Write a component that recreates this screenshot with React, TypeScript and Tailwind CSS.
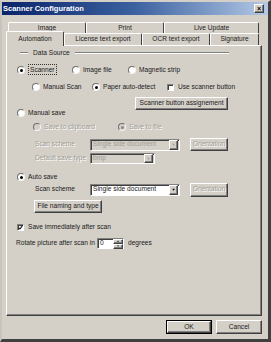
import type { ReactNode } from "react";

const raised =
  "border border-t-white border-l-white border-r-[#404040] border-b-[#404040] shadow-[inset_-1px_-1px_0_#808080]";
const sunken =
  "border border-t-[#808080] border-l-[#808080] border-r-white border-b-white shadow-[inset_1px_1px_0_#404040]";

function Radio({ checked, disabled, children }: { checked?: boolean; disabled?: boolean; children: ReactNode }) {
  return (
    <div className="flex items-center">
      <div
        className={`flex h-[8px] w-[8px] items-center justify-center rounded-full border border-t-[#707070] border-l-[#707070] border-r-[#f4f4f4] border-b-[#f4f4f4] ${
          disabled ? "bg-[#d4d0c8]" : "bg-white"
        }`}
      >
        {checked && <div className={`h-[3px] w-[3px] rounded-full ${disabled ? "bg-[#8a8a8a]" : "bg-black"}`} />}
      </div>
      <span className={`ml-[3px] ${disabled ? "text-[#a19d95] [text-shadow:1px_1px_0_#fff]" : ""}`}>{children}</span>
    </div>
  );
}

function Check({ checked, children }: { checked?: boolean; children: ReactNode }) {
  return (
    <div className="flex items-center">
      <div className={`flex h-[7px] w-[7px] items-center justify-center bg-white ${sunken}`}>
        {checked && <span className="text-[7px] font-bold leading-none text-black">✓</span>}
      </div>
      <span className="ml-[4px]">{children}</span>
    </div>
  );
}

function Button({ w, h, disabled, children }: { w: string; h: string; disabled?: boolean; children: ReactNode }) {
  return (
    <div
      className={`flex items-center justify-center bg-[#d4d0c8] ${raised} ${w} ${h} ${
        disabled ? "text-[#a19d95] [text-shadow:1px_1px_0_#fff]" : ""
      }`}
    >
      {children}
    </div>
  );
}

function Combo({ w, h, value, disabled }: { w: string; h: string; value: string; disabled?: boolean }) {
  return (
    <div className={`flex items-center ${sunken} ${w} ${h} ${disabled ? "bg-[#d4d0c8]" : "bg-white"}`}>
      <span className={`flex-1 pl-[2px] ${disabled ? "text-[#a19d95]" : ""}`}>{value}</span>
      <div className={`mr-[1px] flex h-full w-[9px] items-center justify-center bg-[#d4d0c8] ${raised}`}>
        <span className={`text-[4px] leading-none ${disabled ? "text-[#a19d95]" : "text-black"}`}>▼</span>
      </div>
    </div>
  );
}

function Tab({ label, w, selected, h }: { label: string; w: string; selected?: boolean; h: string }) {
  return (
    <div
      className={`flex items-center justify-center rounded-t-[2px] border-t border-l border-r border-t-white border-l-white border-r-[#404040] bg-[#d4d0c8] ${w} ${h} ${
        selected ? "relative z-10 -mb-px" : ""
      }`}
    >
      {label}
    </div>
  );
}

export default function App() {
  return (
    <div className="flex h-[342px] w-[271px] flex-col overflow-hidden whitespace-nowrap border-t-2 border-l-2 border-r-[3px] border-b-[3px] border-t-[#d4d0c8] border-l-[#c8c4bc] border-r-[#404040] border-b-[#404040] bg-[#d4d0c8] font-['Liberation_Sans',Arial,sans-serif] text-[6.6px] leading-none text-[#1a1a1a]">
      {/* title bar */}
      <div className="flex h-[13px] items-center bg-gradient-to-r from-[#0a246a] via-[#3d62a0] to-[#b4c9e6] pl-[1px]">
        <span className="text-[7.5px] font-bold text-white">Scanner Configuration</span>
        <div className={`mr-[4px] ml-auto flex h-[9px] w-[10px] items-center justify-center bg-[#d4d0c8] ${raised}`}>
          <span className="text-[7px] font-bold text-black">×</span>
        </div>
      </div>

      {/* tabs */}
      <div className="mt-[7px] flex h-[11px] pl-[6px]">
        <Tab label="Image" w="w-[78px]" h="h-[11px]" />
        <Tab label="Print" w="w-[78px]" h="h-[11px]" />
        <Tab label="Live Update" w="w-[95px]" h="h-[11px]" />
      </div>
      <div className="-mt-[2px] flex h-[14px] items-end pl-[4px]">
        <Tab label="Automation" w="w-[58px]" h="h-[15px]" selected />
        <Tab label="License text export" w="w-[78px]" h="h-[12px]" />
        <Tab label="OCR text export" w="w-[68px]" h="h-[12px]" />
        <Tab label="Signature" w="w-[49px]" h="h-[12px]" />
      </div>

      {/* page */}
      <div className={`ml-[4px] flex h-[271px] w-[256px] flex-col bg-[#d4d0c8] ${raised}`}>
        <div className="flex h-[14px] items-center">
          <div className="ml-[13px] flex w-[209px] items-center">
            <div className="h-[2px] w-[8px] border-t border-b border-t-[#808080] border-b-white" />
            <span className="mx-[5px]">Data Source</span>
            <div className="h-[2px] flex-1 border-t border-b border-t-[#808080] border-b-white" />
          </div>
        </div>

        <div className="mt-[3px] flex h-[14px] items-center pl-[10px]">
          <div className="w-[55px]">
            <Radio checked>
              <span className="border border-dotted border-[#333] px-[1px] py-[1px]">Scanner</span>
            </Radio>
          </div>
          <div className="w-[56px]">
            <Radio>Image file</Radio>
          </div>
          <Radio>Magnetic strip</Radio>
        </div>

        <div className="mt-[3px] flex h-[14px] items-center pl-[25px]">
          <div className="w-[60px]">
            <Radio>Manual Scan</Radio>
          </div>
          <div className="w-[75px]">
            <Radio checked>Paper auto-detect</Radio>
          </div>
          <Check>Use scanner button</Check>
        </div>

        <div className="mt-[3px] flex h-[13px] pl-[128px]">
          <Button w="w-[93px]" h="h-[13px]">
            Scanner button assignement
          </Button>
        </div>

        <div className="-mt-[3px] flex h-[12px] items-center pl-[10px]">
          <Radio>Manual save</Radio>
        </div>

        <div className="mt-[2px] flex h-[12px] items-center pl-[26px]">
          <div className="w-[85px]">
            <Radio disabled>Save to clipboard</Radio>
          </div>
          <Radio disabled checked>
            Save to file
          </Radio>
        </div>

        <div className="mt-[5px] flex h-[13px] items-center pl-[28px]">
          <span className="w-[55px] text-[#a19d95] [text-shadow:1px_1px_0_#fff]">Scan scheme</span>
          <Combo w="w-[90px]" h="h-[12px]" value="Single side document" disabled />
          <div className="ml-[10px]">
            <Button w="w-[38px]" h="h-[13px]" disabled>
              Orientation
            </Button>
          </div>
        </div>

        <div className="mt-[2px] flex h-[11px] items-center pl-[28px]">
          <span className="w-[55px] text-[#a19d95] [text-shadow:1px_1px_0_#fff]">Default save type</span>
          <Combo w="w-[65px]" h="h-[11px]" value="bmp" disabled />
        </div>

        <div className="mt-[7px] flex h-[12px] items-center pl-[10px]">
          <Radio checked>Auto save</Radio>
        </div>

        <div className="flex h-[13px] items-center pl-[28px]">
          <span className="w-[55px]">Scan scheme</span>
          <Combo w="w-[90px]" h="h-[12px]" value="Single side document" />
          <div className="ml-[10px]">
            <Button w="w-[38px]" h="h-[14px]" disabled>
              Orientation
            </Button>
          </div>
        </div>

        <div className="mt-[4px] flex h-[13px] pl-[27px]">
          <Button w="w-[68px]" h="h-[13px]">
            File naming and type
          </Button>
        </div>

        <div className="mt-[8px] flex h-[12px] items-center pl-[10px]">
          <Check checked>Save immediately after scan</Check>
        </div>

        <div className="mt-[5px] flex h-[11px] items-center pl-[9px]">
          <span className="w-[81px]">Rotate picture after scan in</span>
          <div className={`flex h-[11px] w-[27px] items-center bg-white ${sunken}`}>
            <span className="flex-1 pl-[2px]">0</span>
            <div className="flex h-full w-[10px] flex-col">
              <div className={`flex flex-1 items-center justify-center bg-[#d4d0c8] ${raised}`}>
                <span className="text-[3px] leading-none">▲</span>
              </div>
              <div className={`flex flex-1 items-center justify-center bg-[#d4d0c8] ${raised}`}>
                <span className="text-[3px] leading-none">▼</span>
              </div>
            </div>
          </div>
          <span className="ml-[4px]">degrees</span>
        </div>
      </div>

      {/* dialog buttons */}
      <div className="mt-[4px] flex h-[14px] justify-end gap-[4px] pr-[6px]">
        <div className="border border-black">
          <Button w="w-[44px]" h="h-[12px]">
            OK
          </Button>
        </div>
        <Button w="w-[46px]" h="h-[14px]">
          Cancel
        </Button>
      </div>
    </div>
  );
}
